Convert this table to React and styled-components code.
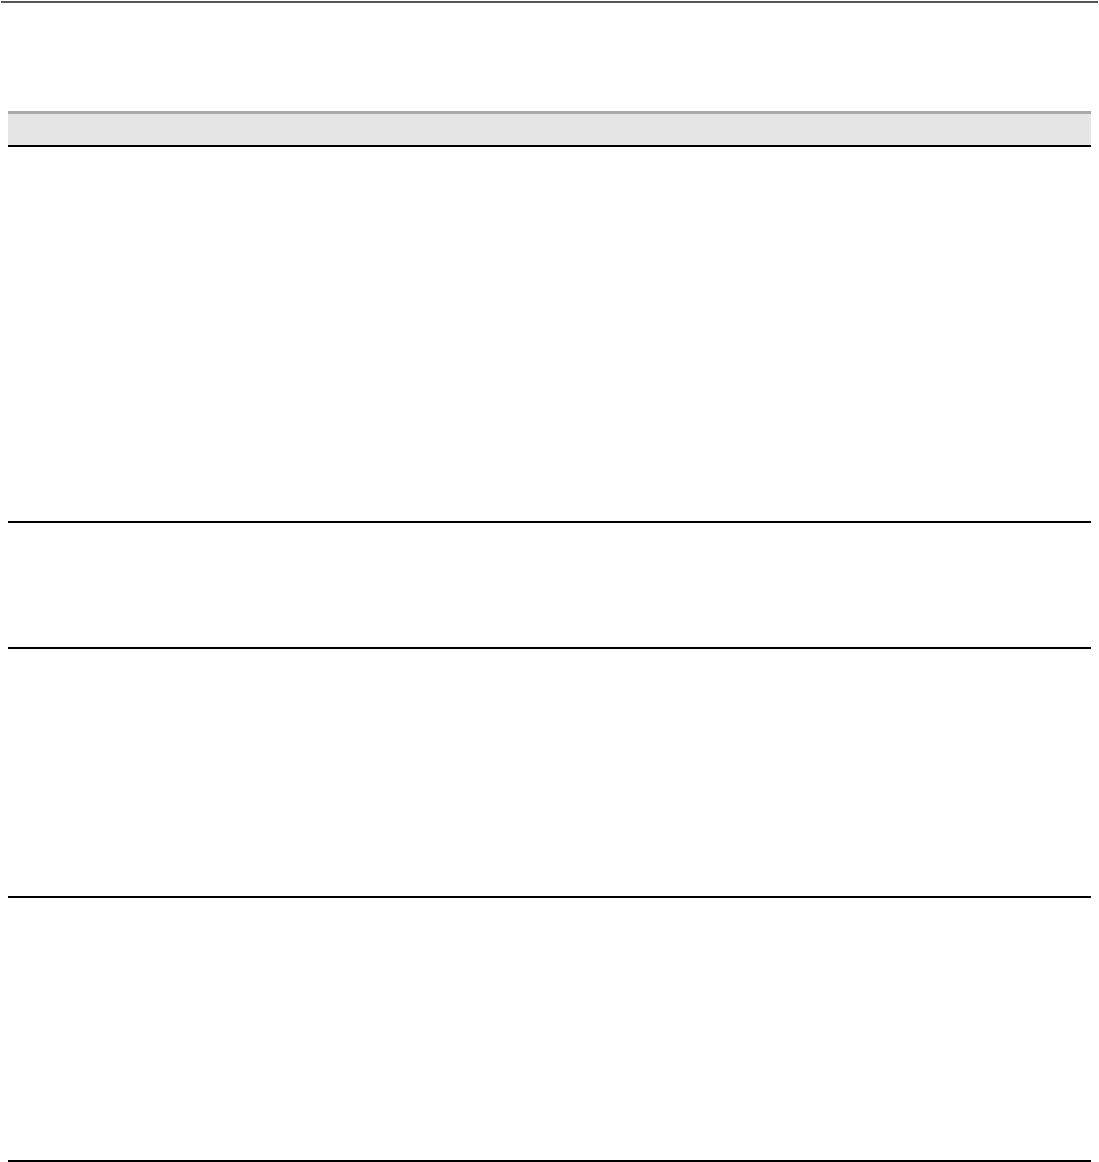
import React from 'react'
import styled, { createGlobalStyle } from 'styled-components'

const GlobalStyle = createGlobalStyle`
  html, body {
    margin: 0;
    padding: 0;
    background: #fff;
    font-family: "Liberation Sans", Arial, sans-serif;
  }
`

const Page = styled.div`
  padding-top: 1px;
  min-height: 1162px;
  box-sizing: border-box;
`

const TopRule = styled.div`
  height: 2px;
  margin: 0 1px;
  background: #555555;
`

const Table = styled.div`
  margin: 108px 8px 0;
  display: flex;
  flex-direction: column;
`

const HeaderRow = styled.div`
  height: 31px;
  background: #e5e5e5;
  border-top: 3px solid #aaaaaa;
  border-bottom: 2px solid #000;
`

const Row = styled.div`
  height: ${({ $h }) => $h}px;
  border-bottom: 2px solid #000;
`

const rows = [374, 124, 247, 262]

const App = () => {
  return (
    <Page>
      <GlobalStyle />
      <TopRule />
      <Table>
        <HeaderRow />
        {rows.map((h, i) => (
          <Row key={i} $h={h} />
        ))}
      </Table>
    </Page>
  )
}

export default App
